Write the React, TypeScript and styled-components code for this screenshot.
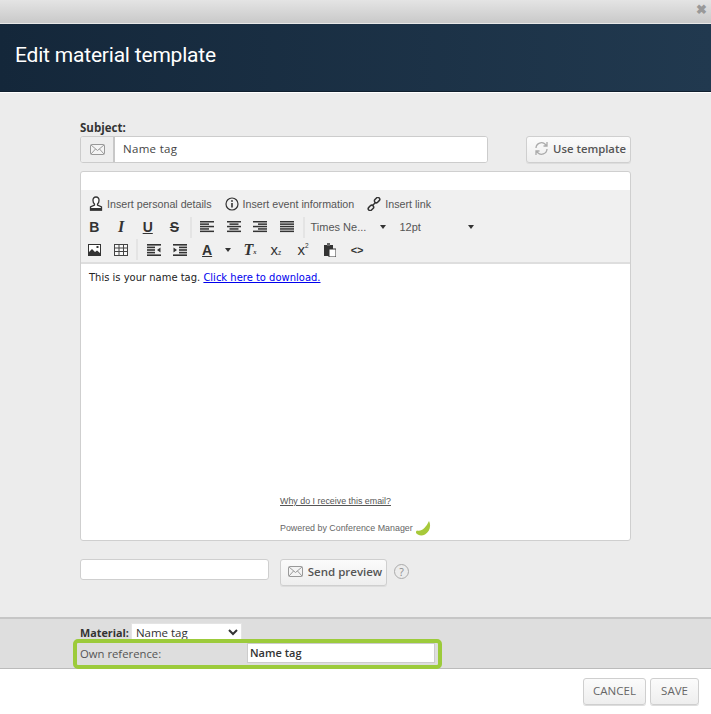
import React from "react";
import styled, { createGlobalStyle } from "styled-components";

const Global = createGlobalStyle`
  html, body { margin: 0; padding: 0; background: #fff; }
  * { box-sizing: border-box; }
`;
const Modal = styled.div`
  width: 711px; height: 714px; display: flex; flex-direction: column; overflow: hidden;
  font-family: "Open Sans", "Liberation Sans", sans-serif;
`;
const TopBar = styled.div`
  height: 24px; flex: none; display: flex; justify-content: flex-end; align-items: center; padding: 0 4px 4px 0;
  background: linear-gradient(#e4e4e4, #c9c9c9);
  border-bottom: 1px solid #e8e8e8;
  color: #999; font-size: 13px; font-weight: 700; line-height: 1;
`;
const Header = styled.header`
  height: 68px; flex: none; display: flex; align-items: center; padding: 0 0 6px 15px;
  background: linear-gradient(90deg, #14273a, #21394f);
  border-bottom: 1px solid #101f2e;
`;
const Title = styled.h1`
  margin: 0; color: #fff; font: 400 21px "Roboto", sans-serif; letter-spacing: -0.2px;
`;
const Main = styled.main`
  flex: 1; min-height: 0; background: #ececec; border-top: 1px solid #fff; padding: 28px 80px 0; display: flex; flex-direction: column;
`;
const Label = styled.label`
  font: 700 11.5px/14px "Open Sans", sans-serif; color: #333; height: 15px;
`;
const SubjectRow = styled.div`
  display: flex; justify-content: space-between; height: 27px; flex: none;
`;
const SubjectField = styled.div`
  width: 408px; display: flex; border: 1px solid #ccc; border-radius: 3px; background: #fff; overflow: hidden;
`;
const Addon = styled.span`
  width: 34px; display: flex; align-items: center; justify-content: center; background: #eee; border-right: 2px solid #c8c8c8; color: #999;
`;
const SubjectInput = styled.input`
  flex: 1; border: 0; outline: 0; padding: 0 0 3px 8px; font: 400 11.5px "Open Sans", sans-serif; color: #444; letter-spacing: .3px; min-width: 0;
`;
const Button = styled.button<{ $w: number }>`
  display: flex; align-items: center; justify-content: center; gap: 4px; padding: 0 0 2px;
  border: 1px solid #cfcfcf; border-radius: 3px; background: linear-gradient(#fbfbfb, #eeeeee);
  color: #555; font: 600 11.3px "Open Sans", sans-serif; height: 27px; width: ${p => p.$w}px;
  box-shadow: 0 1px 0 #ddd;
`;
const TemplateButton = styled(Button)`
  padding-left: 3px;
`;
const Editor = styled.section`
  margin-top: 8px; height: 370px; flex: none; background: #fff; border: 1px solid #cfcfcf; border-radius: 3px; display: flex; flex-direction: column;
`;
const Toolbar = styled.div`
  margin-top: 18px; height: 74px; flex: none; background: #f0f0f0; border-bottom: 2px solid #dedede; color: #333;
`;
const ToolRow = styled.div<{ $h: number; $pad?: number }>`
  height: ${p => p.$h}px; display: flex; align-items: center; padding-left: ${p => p.$pad || 0}px;
`;
const InsertItem = styled.span`
  display: flex; align-items: center; gap: 4px; margin-right: 13px; font: 400 10.7px "Liberation Sans", sans-serif; color: #555;
`;
const Tool = styled.span<{ $w?: number; $i?: boolean; $d?: string; $ml?: number; $fs?: number; $fw?: number }>`
  width: ${p => p.$w || 26.7}px; height: 20px; flex: none; display: flex; align-items: center; justify-content: center;
  margin-left: ${p => p.$ml || 0}px;
  font-style: ${p => p.$i ? "italic" : "normal"};
  font-weight: ${p => p.$fw || 700};
  font-size: ${p => p.$fs || 14}px;
  color: #333;
  text-decoration: ${p => p.$d || "none"};
  font-family: ${p => p.$i ? '"Liberation Serif"' : '"Liberation Sans"'}, sans-serif;
`;
const Sep = styled.span<{ $m?: number }>`
  width: 2px; height: 21px; flex: none; background: #e4e4e4; margin: 0 ${p => p.$m || 2}px;
`;
const Caret = styled.span<{ $ml?: number; $mr?: number }>`
  width: 0; height: 0; flex: none; border: 3.5px solid transparent; border-top: 4px solid #333; border-bottom: 0;
  margin-left: ${p => p.$ml || 0}px; margin-right: ${p => p.$mr || 0}px;
`;
const FontPick = styled.span<{ $w: number; $pad: number }>`
  width: ${p => p.$w}px; padding-left: ${p => p.$pad}px; flex: none; display: flex; align-items: center; font: 400 11px "Liberation Sans", sans-serif; color: #555;
`;
const Pad = styled.span`
  flex: 1;
`;
const Content = styled.div`
  flex: 1; min-height: 0; display: flex; flex-direction: column; padding: 7px 8px 5px;
  font: 400 9.97px/14px "DejaVu Sans", sans-serif; color: #222;
`;
const Link = styled.a`
  color: #0000ee; text-decoration: underline;
`;
const Legal = styled.div`
  margin-top: auto; padding-left: 191px; font: 400 8.9px "Liberation Sans", sans-serif; color: #666;
`;
const Why = styled.div`
  text-decoration: underline; margin-bottom: 15px; color: #555;
`;
const Powered = styled.div`
  display: flex; align-items: center; gap: 3px; height: 14px;
`;
const PreviewRow = styled.div`
  margin-top: 18px; display: flex; align-items: flex-start; gap: 11px; flex: none;
`;
const PreviewInput = styled.input`
  width: 189px; height: 21px; border: 1px solid #cfcfcf; border-radius: 3px; background: #fff; outline: 0;
`;
const PreviewButton = styled(Button)`
  font-size: 11.5px; gap: 5px; padding-left: 3px;
`;
const Help = styled.span`
  width: 15px; height: 15px; margin: 5px 0 0 -4px; border: 1px solid #aaa; border-radius: 50%; display: flex; align-items: center; justify-content: center;
  font: 400 10.5px "Open Sans", sans-serif; color: #888;
`;
const Panel = styled.section`
  height: 52px; flex: none; background: #dedede; border-top: 2px solid #c6c6c6; border-bottom: 1px solid #bbb; padding: 4px 0 0 80px;
  position: relative;
`;
const MaterialRow = styled.div`
  display: flex; align-items: center; gap: 2px; height: 18px; font: 700 10.8px "Open Sans", sans-serif; color: #333;
`;
const Select = styled.select`
  width: 111px; height: 18px; border: 1px solid #e4e4e4; background: #fff; padding: 0; font: 500 11.5px "Open Sans", sans-serif; color: #333; outline: 0;
`;
const Highlight = styled.div`
  position: absolute; left: 73px; top: 20px; width: 369px; height: 30px; border: 4px solid #9ccb3b; border-radius: 5px;
  display: flex; align-items: center; padding: 0 0 2px 3px;
`;
const OwnLabel = styled.span`
  width: 167px; font: 400 11.3px "Open Sans", sans-serif; color: #555;
`;
const OwnInput = styled.input`
  width: 188px; height: 20px; border: 1px solid #ccc; background: #fff; padding: 0 0 2px 2px; outline: 0; font: 600 11px "Open Sans", sans-serif; color: #333;
`;
const Actions = styled.footer`
  height: 45px; flex: none; background: #fff; display: flex; justify-content: flex-end; gap: 4px; padding: 9px 12px 0 0;
`;
const ActionButton = styled(Button)`
  font: 400 11.5px "Open Sans", sans-serif; color: #666;
`;
const Sub = styled.sup<{ $t: number }>`
  font-size: 6.5px; line-height: 0; position: relative; top: ${p => p.$t}px; vertical-align: baseline;
`;
const FlipBox = styled.span`
  display: flex; transform: scaleX(-1);
`;

const Mail = () => (
  <svg width="15" height="11" viewBox="0 0 15 11" fill="none" stroke="#999" strokeWidth="1">
    <rect x=".5" y=".5" width="14" height="10" rx="1" fill="#f4f4f4" />
    <path d="M1 1l6.5 5.5L14 1M1 10l4.5-5M14 10L9.5 5" />
  </svg>
);
const Sync = () => (
  <svg width="15" height="15" viewBox="0 0 15 15" fill="none" stroke="#aaa" strokeWidth="1.3">
    <path d="M2 7a5.5 5.5 0 0 1 9.5-3.5L13 5M13 1v4H9.5" />
    <path d="M13 8a5.5 5.5 0 0 1-9.5 3.5L2 10M2 14v-4h3.5" />
  </svg>
);
const Person = () => (
  <svg width="14" height="15" viewBox="0 0 14 15">
    <path d="M7 1a3 3 0 0 1 3 3.5c0 1.5-.8 3-1.500 3.500v1l4 2v3H1.500v-3l4-2V8C4.800 7.500 4 6 4 4.500A3 3 0 0 1 7 1z" fill="#fff" stroke="#333" strokeWidth="1.3" />
    <rect x="1" y="12" width="12" height="2.5" fill="#333" />
  </svg>
);
const Info = () => (
  <svg width="14" height="14" viewBox="0 0 14 14" fill="none" stroke="#333" strokeWidth="1.2">
    <circle cx="7" cy="7" r="6" />
    <path d="M7 6v4.5" strokeWidth="1.6" />
    <circle cx="7" cy="4" r=".9" fill="#333" stroke="none" />
  </svg>
);
const Chain = () => (
  <svg width="14" height="14" viewBox="0 0 14 14" fill="none" stroke="#333" strokeWidth="1.5">
    <rect x="7" y="1.2" width="6" height="3.8" rx="1.9" transform="rotate(-45 10 3)" />
    <rect x="1" y="9" width="6" height="3.8" rx="1.9" transform="rotate(-45 4 11)" />
    <path d="M5.5 8.5l3-3" />
  </svg>
);
const Lines = ({ rows }: { rows: [number, number][] }) => (
  <svg width="14" height="12" viewBox="0 0 14 12" fill="#333">
    {rows.map(([x, w], i) => <rect key={i} x={x} y={i * 2.4} width={w} height="1.5" />)}
  </svg>
);
const ImageIcon = () => (
  <svg width="13" height="12" viewBox="0 0 13 12">
    <rect x=".5" y=".5" width="12" height="11" fill="#fff" stroke="#333" />
    <path d="M1 11V8l3-3 3 3 2-1.500L12 9v2z" fill="#333" />
    <rect x="8.5" y="2" width="2" height="2" fill="#333" />
  </svg>
);
const TableIcon = () => (
  <svg width="14" height="12" viewBox="0 0 14 12" fill="#f8f8f8" stroke="#444" strokeWidth="1">
    <rect x=".5" y=".5" width="13" height="11" />
    <path d="M.5 4h13M.5 7.500h13M5 .5v11M9.500 .5v11" fill="none" />
  </svg>
);
const Outdent = () => (
  <svg width="14" height="12" viewBox="0 0 14 12" fill="#333">
    <rect width="14" height="1.6" />
    <rect y="2.6" width="8" height="1.6" />
    <rect y="5.2" width="8" height="1.6" />
    <rect y="7.8" width="8" height="1.6" />
    <rect y="10.4" width="14" height="1.6" />
    <path d="M13.5 3.500v5L10 6z" />
  </svg>
);
const Paste = () => (
  <svg width="12" height="14" viewBox="0 0 12 14">
    <rect x="0" y="2" width="9" height="11" fill="#333" />
    <rect x="3" y="0" width="3" height="3" fill="#666" />
    <rect x="5" y="6" width="7" height="8" fill="#fff" stroke="#333" />
  </svg>
);
const Logo = () => (
  <svg width="15" height="15" viewBox="0 0 15 15">
    <path d="M13 0c2.500 5 .5 11-4 13.500-3.500 1.800-7 1-9-1.500-.3-1 .2-2 1-2.500 4.500 1.500 9-3 12-9.500z" fill="#a7c93a" />
  </svg>
);

export default function App() {
  return (
    <Modal>
      <Global />
      <TopBar>✖</TopBar>
      <Header><Title>Edit material template</Title></Header>
      <Main>
        <Label>Subject:</Label>
        <SubjectRow>
          <SubjectField>
            <Addon><Mail /></Addon>
            <SubjectInput defaultValue="Name tag" />
          </SubjectField>
          <TemplateButton $w={105}><Sync />Use template</TemplateButton>
        </SubjectRow>
        <Editor>
          <Toolbar>
            <ToolRow $h={27} $pad={8}>
              <InsertItem><Person />Insert personal details</InsertItem>
              <InsertItem><Info />Insert event information</InsertItem>
              <InsertItem><Chain />Insert link</InsertItem>
            </ToolRow>
            <ToolRow $h={20}>
              <Tool>B</Tool>
              <Tool $i $fs={16}>I</Tool>
              <Tool $d="underline">U</Tool>
              <Tool $d="line-through">S</Tool>
              <Sep />
              <Tool><Lines rows={[[0, 14], [0, 9], [0, 14], [0, 9], [0, 14]]} /></Tool>
              <Tool><Lines rows={[[0, 14], [2.5, 9], [0, 14], [2.5, 9], [0, 14]]} /></Tool>
              <Tool><Lines rows={[[0, 14], [5, 9], [0, 14], [5, 9], [0, 14]]} /></Tool>
              <Tool><Lines rows={[[0, 14], [0, 14], [0, 14], [0, 14], [0, 14]]} /></Tool>
              <Sep />
              <FontPick $w={90} $pad={4}>Times Ne...<Pad /><Caret $mr={11} /></FontPick>
              <FontPick $w={77} $pad={3}>12pt<Pad /><Caret /></FontPick>
            </ToolRow>
            <ToolRow $h={25}>
              <Tool><ImageIcon /></Tool>
              <Tool><TableIcon /></Tool>
              <Sep />
              <Tool><Outdent /></Tool>
              <Tool><FlipBox><Outdent /></FlipBox></Tool>
              <Tool $d="underline">A</Tool>
              <Caret $ml={5} />
              <Tool $ml={6} $w={25} $i $fs={16}>T<Sub $t={2}>x</Sub></Tool>
              <Tool $w={27} $fs={15} $fw={400}>x<Sub $t={3}>z</Sub></Tool>
              <Tool $w={27} $fs={15} $fw={400}>x<Sub $t={-4}>2</Sub></Tool>
              <Tool><Paste /></Tool>
              <Tool $w={28} $fs={11}>&lt;&gt;</Tool>
            </ToolRow>
          </Toolbar>
          <Content>
            <div>This is your name tag. <Link href="#">Click here to download.</Link></div>
            <Legal>
              <Why>Why do I receive this email?</Why>
              <Powered>Powered by Conference Manager<Logo /></Powered>
            </Legal>
          </Content>
        </Editor>
        <PreviewRow>
          <PreviewInput />
          <PreviewButton $w={107}><Mail />Send preview</PreviewButton>
          <Help>?</Help>
        </PreviewRow>
      </Main>
      <Panel>
        <MaterialRow>
          Material:
          <Select defaultValue="Name tag"><option>Name tag</option></Select>
        </MaterialRow>
        <Highlight>
          <OwnLabel>Own reference:</OwnLabel>
          <OwnInput defaultValue="Name tag" />
        </Highlight>
      </Panel>
      <Actions>
        <ActionButton $w={63}>CANCEL</ActionButton>
        <ActionButton $w={49}>SAVE</ActionButton>
      </Actions>
    </Modal>
  );
}
